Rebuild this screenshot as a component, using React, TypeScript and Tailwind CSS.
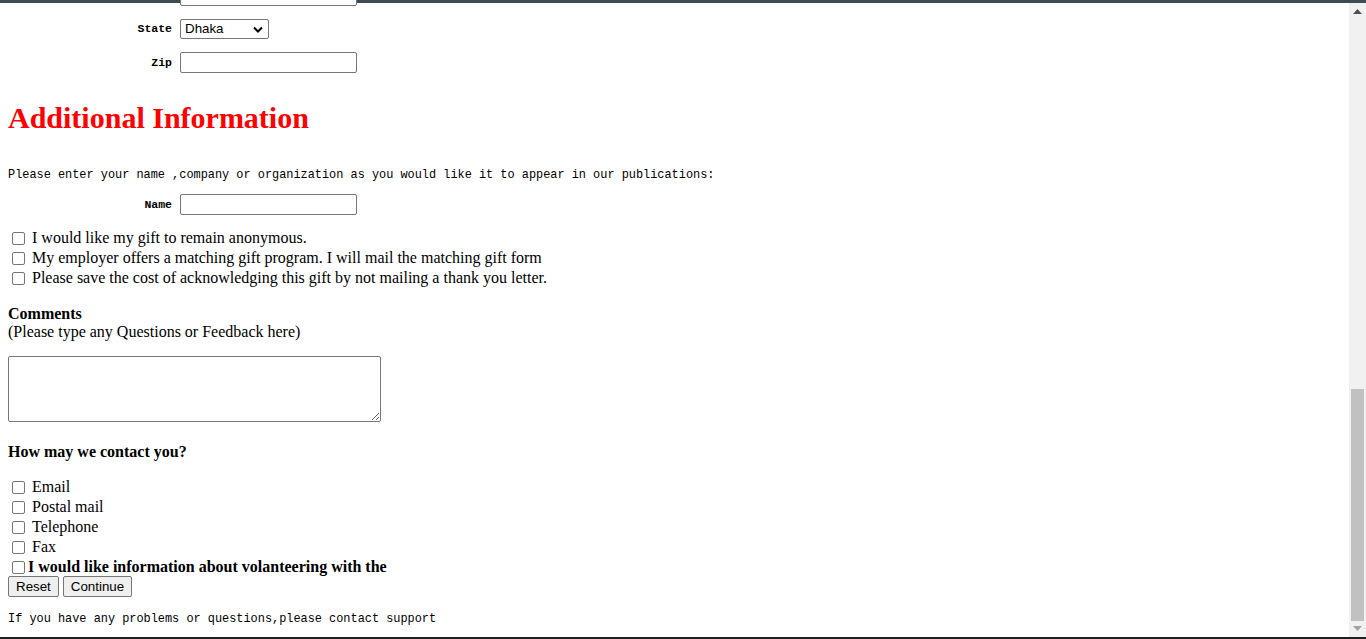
import React from 'react';

const mono = "font-['Liberation_Mono',Consolas,monospace]";
const serif = "font-['Liberation_Serif','Times_New_Roman',serif]";
const sans = "font-['Liberation_Sans',Arial,sans-serif]";

function Box() {
  return (
    <span className="ml-[4px] mr-[3px] inline-block h-[13px] w-[13px] shrink-0 rounded-[2px] border border-[#767676] bg-white" />
  );
}

function TextInput() {
  return <div className="h-[21px] w-[177px] rounded-[2px] border border-[#767676] bg-white" />;
}

function FieldRow({ label, children }: { label: string; children: React.ReactNode }) {
  return (
    <div className="flex items-center">
      <div className={`w-[164px] text-right text-[11.5px] font-bold text-black ${mono}`}>{label}</div>
      <div className="ml-[8px]">{children}</div>
    </div>
  );
}

function CheckRow({ label }: { label: string }) {
  return (
    <div className="flex h-[20px] items-center">
      <Box />
      <span className="ml-[4px]">{label}</span>
    </div>
  );
}

function Scrollbar() {
  return (
    <div className="relative flex w-[17px] shrink-0 flex-col items-center bg-[#f1f1f1]">
      <svg width="9" height="5" viewBox="0 0 9 5" className="mt-[6px]">
        <polygon points="0,5 9,5 4.5,0" fill="#505050" />
      </svg>
      <div className="mt-[375px] h-[232px] w-[13px] bg-[#c1c1c1]" />
      <svg width="9" height="5" viewBox="0 0 9 5" className="mt-[5px]">
        <polygon points="0,0 9,0 4.5,5" fill="#a3a3a3" />
      </svg>
    </div>
  );
}

export default function App() {
  return (
    <div className={`flex h-[639px] w-[1366px] flex-col overflow-hidden bg-white text-black ${serif}`}>
      <div className="h-[3px] w-full shrink-0 bg-[#3d4b53]" />
      <div className="flex min-h-0 flex-1">
        <div className="min-w-0 flex-1 px-[8px] text-[16px] leading-[18px]">
          {/* address table, scrolled */}
          <div className="-mt-[18px] flex flex-col gap-[13px]">
            <FieldRow label="">
              <TextInput />
            </FieldRow>
            <FieldRow label="State">
              <div className={`flex h-[20px] w-[89px] items-center justify-between rounded-[2px] border border-[#767676] bg-white pl-[4px] pr-[5px] text-[13.33px] ${sans}`}>
                <span>Dhaka</span>
                <svg width="10" height="7" viewBox="0 0 10 7">
                  <polyline points="1,1.5 5,5.5 9,1.5" fill="none" stroke="#000" strokeWidth="2" />
                </svg>
              </div>
            </FieldRow>
            <FieldRow label="Zip">
              <TextInput />
            </FieldRow>
          </div>

          <h1 className="mt-[28px] text-[30px] font-bold leading-[34px] text-[#ff0000]">Additional Information</h1>

          <p className={`mt-[33px] text-[11.9px] leading-[14px] ${mono}`}>
            Please enter your name ,company or organization as you would like it to appear in our publications:
          </p>

          <div className="mt-[12px]">
            <FieldRow label="Name">
              <TextInput />
            </FieldRow>
          </div>

          <div className="mt-[13px]">
            <CheckRow label="I would like my gift to remain anonymous." />
            <CheckRow label="My employer offers a matching gift program. I will mail the matching gift form" />
            <CheckRow label="Please save the cost of acknowledging this gift by not mailing a thank you letter." />
          </div>

          <div className="mt-[17px]">
            <div className="font-bold">Comments</div>
            <div>(Please type any Questions or Feedback here)</div>
          </div>

          <textarea className="mt-[15px] block h-[66px] w-[373px] resize rounded-[2px] border border-[#767676] bg-white" />

          <div className="mt-[21px] font-bold">How may we contact you?</div>

          <div className="mt-[16px]">
            <CheckRow label="Email" />
            <CheckRow label="Postal mail" />
            <CheckRow label="Telephone" />
            <CheckRow label="Fax" />
            <div className="flex h-[20px] items-center">
              <Box />
              <span className="font-bold">I would like information about volanteering with the</span>
            </div>
          </div>

          <div className={`-mt-[1px] flex gap-[4px] text-[13.33px] ${sans}`}>
            <button className="h-[21px] rounded-[2px] border border-[#767676] bg-[#efefef] px-[7px] leading-[19px]">Reset</button>
            <button className="h-[21px] rounded-[2px] border border-[#767676] bg-[#efefef] px-[7px] leading-[19px]">Continue</button>
          </div>

          <p className={`mt-[15px] text-[11.9px] leading-[14px] ${mono}`}>
            If you have any problems or questions,please contact support
          </p>
        </div>
        <Scrollbar />
      </div>
      <div className="h-[2px] w-full shrink-0 bg-[#202020]" />
    </div>
  );
}
